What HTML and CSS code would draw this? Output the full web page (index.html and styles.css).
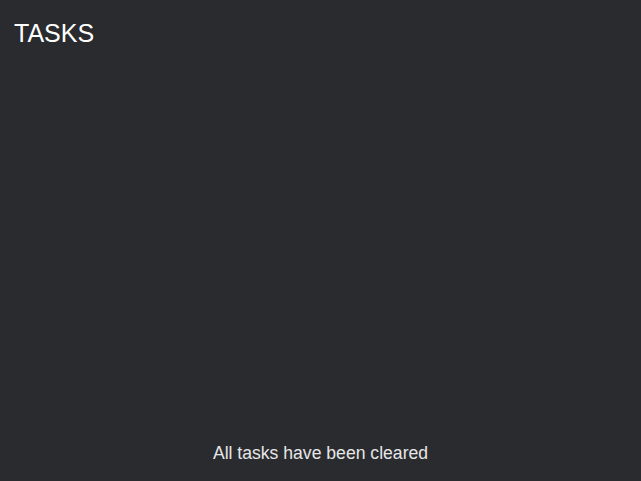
FILE: index.html
```html
<!DOCTYPE html>
<html>
<head>
<meta charset="utf-8">
<link rel="stylesheet" href="styles.css">
</head>
<body>
<div class="panel">
  <h1 class="title">TASKS</h1>
  <div class="list"></div>
  <p class="empty">All tasks have been cleared</p>
</div>
</body>
</html>
```
FILE: styles.css
```css
html, body {
  margin: 0;
  padding: 0;
  height: 100%;
  background: #2a2b2f;
}
.panel {
  height: 100%;
  box-sizing: border-box;
  display: flex;
  flex-direction: column;
  font-family: "Liberation Sans", Arial, sans-serif;
  padding: 19px 14px 17px;
}
.title {
  margin: 0;
  font-size: 25px;
  font-weight: normal;
  color: #ffffff;
  line-height: 28px;
}
.list {
  flex: 1;
}
.empty {
  margin: 0;
  text-align: center;
  font-size: 17.6px;
  line-height: 22px;
  color: #e6e6e6;
}
```
